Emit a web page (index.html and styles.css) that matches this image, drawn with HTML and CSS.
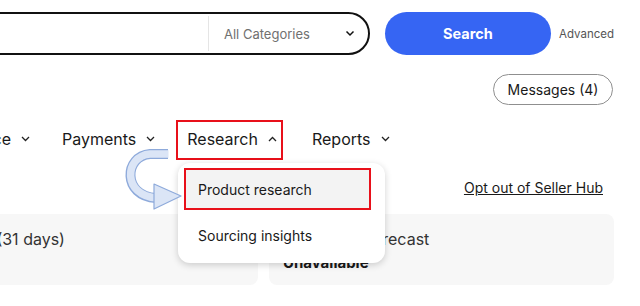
FILE: index.html
```html
<!DOCTYPE html>
<html>
<head>
<meta charset="utf-8">
<link rel="stylesheet" href="styles.css">
</head>
<body>
<div class="page">
  <div class="top">
    <div class="field">
      <div class="input"></div>
      <div class="cat">
        <span>All Categories</span>
        <svg class="chev" width="10" height="7" viewBox="0 0 10 7"><path d="M1.5 1.5 L5 5 L8.5 1.5" fill="none" stroke="#111" stroke-width="1.5"/></svg>
      </div>
    </div>
    <div class="search-btn">Search</div>
    <div class="advanced">Advanced</div>
  </div>

  <div class="msgrow">
    <div class="msg-btn">Messages (4)</div>
  </div>

  <nav class="nav">
    <div class="nav-item first">Performance <svg class="nchev" width="9" height="6" viewBox="0 0 9 6"><path d="M1 1 L4.5 4.5 L8 1" fill="none" stroke="#222" stroke-width="1.3"/></svg></div>
    <div class="nav-item">Payments <svg class="nchev" width="9" height="6" viewBox="0 0 9 6"><path d="M1 1 L4.5 4.5 L8 1" fill="none" stroke="#222" stroke-width="1.3"/></svg></div>
    <div class="nav-item active">Research <svg class="nchev" width="9" height="6" viewBox="0 0 9 6"><path d="M1 5 L4.5 1.5 L8 5" fill="none" stroke="#222" stroke-width="1.3"/></svg></div>
    <div class="nav-item">Reports <svg class="nchev" width="9" height="6" viewBox="0 0 9 6"><path d="M1 1 L4.5 4.5 L8 1" fill="none" stroke="#222" stroke-width="1.3"/></svg></div>
  </nav>

  <div class="optrow">
    <a class="optout">Opt out of Seller Hub</a>
  </div>

  <div class="cards">
    <div class="card left">
      <div class="card-title">Sales (31 days)</div>
      <div class="card-link">$0</div>
    </div>
    <div class="card right">
      <div class="card-title">Shipments forecast</div>
      <div class="card-value">Unavailable</div>
    </div>
  </div>

  <div class="dropdown">
    <div class="dd-item hl">Product research</div>
    <div class="dd-item">Sourcing insights</div>
  </div>

  <svg class="arrow" width="640" height="306" viewBox="0 0 640 306">
    <path d="M168 154 L150 154 C124 156 122 196 156 198" fill="none" stroke="#8eaadb" stroke-width="10"/>
    <path d="M168.5 154 L150 154 C124 156 122 196 157 198" fill="none" stroke="#dbe5f6" stroke-width="7.5"/>
    <polygon points="154,184 181,196 154,209" fill="#dbe5f6" stroke="#8eaadb" stroke-width="1.2" stroke-linejoin="round"/>
  </svg>
</div>
</body>
</html>
```

FILE: styles.css
```css
* { box-sizing: border-box; }
html, body { margin: 0; padding: 0; background: #fff; }
body {
  font-family: Inter, "Noto Sans", "Liberation Sans", sans-serif;
  color: #191919;
  width: 640px;
  height: 306px;
  overflow: hidden;
}
.page { position: relative; width: 640px; height: 306px; overflow: hidden; }

.top {
  display: flex;
  align-items: center;
  margin-top: 12px;
  height: 43px;
}
.field {
  width: 410px;
  margin-left: -40px;
  height: 43px;
  border: 2px solid #111;
  border-radius: 22px;
  display: flex;
  flex-shrink: 0;
}
.input { flex: 1; }
.cat {
  width: 160px;
  border-left: 1px solid #e5e5e5;
  margin: 2px 0;
  display: flex;
  align-items: center;
  padding-left: 15px;
  font-size: 13px;
  color: #707070;
}
.cat span { flex: 1; }
.chev { margin-right: 13px; }
.search-btn {
  margin-left: 15px;
  width: 166px;
  height: 43px;
  border-radius: 22px;
  background: #3665f3;
  color: #fff;
  font-weight: 700;
  font-size: 14.5px;
  display: flex;
  align-items: center;
  justify-content: center;
  flex-shrink: 0;
}
.advanced {
  margin-left: 8px;
  font-size: 11.5px;
  color: #555;
}

.msgrow {
  display: flex;
  justify-content: flex-end;
  padding-right: 27px;
  margin-top: 19px;
}
.msg-btn {
  width: 120px;
  height: 31px;
  border: 1px solid #8f8f8f;
  border-radius: 16px;
  display: flex;
  align-items: center;
  justify-content: center;
  font-size: 14px;
  color: #191919;
}

.nav {
  display: flex;
  align-items: center;
  height: 40px;
  margin-top: 15px;
  margin-left: -96px;
  gap: 14px;
  font-size: 16px;
  white-space: nowrap;
}
.nav-item {
  display: flex;
  align-items: center;
  height: 40px;
  padding: 0 9px 3px;
  gap: 10px;
}
.nav-item.active {
  border: 2px solid #e8101a;
  padding: 0 4px 3px 9px;
  margin-left: -2px;
  margin-right: 6px;
}

.optrow {
  height: 54px;
  display: flex;
  align-items: center;
  justify-content: flex-end;
  padding-right: 37px;
}
.optout {
  font-size: 14px;
  text-decoration: underline;
  color: #191919;
}

.cards {
  display: flex;
  gap: 11px;
  height: 71px;
}
.card {
  background: #f7f7f7;
  border-radius: 8px;
  padding: 15px 14px;
  display: flex;
  flex-direction: column;
  gap: 4px;
}
.card.left { width: 307px; margin-left: -49px; padding-left: 0; }
.card.right { width: 345px; }
.card-title { font-size: 16px; color: #333; }
.card-link { font-size: 14px; color: #3665f3; text-decoration: underline; margin-left: -20px; }
.card-value { font-size: 15px; font-weight: 700; color: #191919; }

.dropdown {
  position: absolute;
  left: 178px;
  top: 163px;
  width: 207px;
  height: 100px;
  background: #fff;
  border-radius: 12px;
  box-shadow: 0 2px 7px rgba(0,0,0,0.18);
  padding: 5px 14px 5px 6px;
}
.dd-item {
  height: 42px;
  display: flex;
  align-items: center;
  padding-left: 14px;
  font-size: 14px;
  color: #191919;
}
.dd-item.hl {
  background: #f3f3f3;
  border: 2px solid #e8101a;
  padding-left: 12px;
}
.dd-item + .dd-item { margin-top: 4px; }

.arrow { position: absolute; left: 0; top: 0; pointer-events: none; }
```
